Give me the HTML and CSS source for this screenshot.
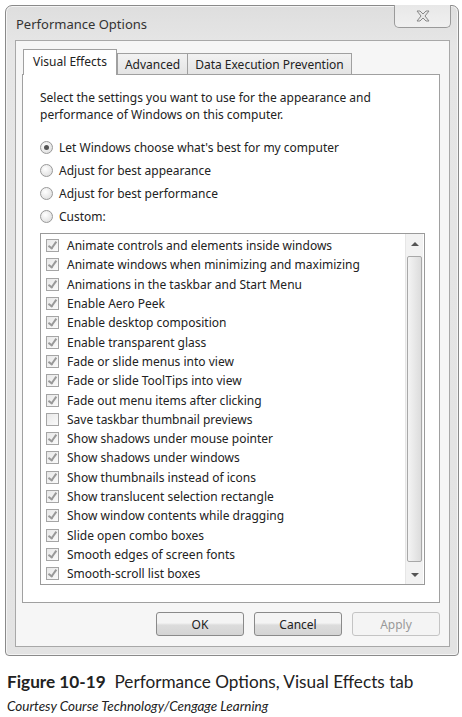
FILE: index.html
```html
<!DOCTYPE html>
<html lang="en">
<head>
    <meta charset="UTF-8">
    <title>Performance Options</title>
    <link rel="stylesheet" href="styles.css">
</head>
<body>
    <div class="window">
        <div class="titlebar">
            <span class="title">Performance Options</span>
            <div class="close">
                <svg width="14" height="12" viewBox="0 0 14 12"><path d="M1 1h3l3 3 3-3h3l-4 5 4 5h-3l-3-3-3 3H1l4-5z" fill="#e8e8e8" stroke="#888" stroke-width="1"/></svg>
            </div>
        </div>
        <div class="client">
            <div class="tabs">
                <div class="tab active">Visual Effects</div>
                <div class="tab">Advanced</div>
                <div class="tab">Data Execution Prevention</div>
            </div>
            <div class="panel">
                <p class="intro">Select the settings you want to use for the appearance and performance of Windows on this computer.</p>
                <div class="radios">
                    <label class="radio"><span class="dot on"></span>Let Windows choose what's best for my computer</label>
                    <label class="radio"><span class="dot"></span>Adjust for best appearance</label>
                    <label class="radio"><span class="dot"></span>Adjust for best performance</label>
                    <label class="radio"><span class="dot"></span>Custom:</label>
                </div>
                <div class="listbox">
                    <ul class="items">
                        <li><span class="check on"></span>Animate controls and elements inside windows</li>
                        <li><span class="check on"></span>Animate windows when minimizing and maximizing</li>
                        <li><span class="check on"></span>Animations in the taskbar and Start Menu</li>
                        <li><span class="check on"></span>Enable Aero Peek</li>
                        <li><span class="check on"></span>Enable desktop composition</li>
                        <li><span class="check on"></span>Enable transparent glass</li>
                        <li><span class="check on"></span>Fade or slide menus into view</li>
                        <li><span class="check on"></span>Fade or slide ToolTips into view</li>
                        <li><span class="check on"></span>Fade out menu items after clicking</li>
                        <li><span class="check"></span>Save taskbar thumbnail previews</li>
                        <li><span class="check on"></span>Show shadows under mouse pointer</li>
                        <li><span class="check on"></span>Show shadows under windows</li>
                        <li><span class="check on"></span>Show thumbnails instead of icons</li>
                        <li><span class="check on"></span>Show translucent selection rectangle</li>
                        <li><span class="check on"></span>Show window contents while dragging</li>
                        <li><span class="check on"></span>Slide open combo boxes</li>
                        <li><span class="check on"></span>Smooth edges of screen fonts</li>
                        <li><span class="check on"></span>Smooth-scroll list boxes</li>
                    </ul>
                    <div class="scrollbar">
                        <div class="arrow up"></div>
                        <div class="thumb"></div>
                        <div class="arrow down"></div>
                    </div>
                </div>
            </div>
            <div class="buttons">
                <button class="btn">OK</button>
                <button class="btn">Cancel</button>
                <button class="btn disabled">Apply</button>
            </div>
        </div>
    </div>
    <div class="caption">
        <p class="figure"><b>Figure 10-19</b>&nbsp; Performance Options, Visual Effects tab</p>
        <p class="credit">Courtesy Course Technology/Cengage Learning</p>
    </div>
</body>
</html>
```

FILE: styles.css
```css
body {
    margin: 0;
    background-color: #fff;
    font-family: 'Noto Sans', 'Open Sans', sans-serif;
    font-size: 12px;
    color: #222;
}
.window {
    box-sizing: border-box;
    width: 454px;
    height: 651px;
    margin: 5px 0 0 5px;
    border: 1px solid #8a8a8a;
    border-radius: 7px 7px 4px 4px;
    background: linear-gradient(to bottom, #dedede, #e6e6e6 40px, #e3e3e3);
    padding: 0 8px 8px 9px;
    box-shadow: inset 0 0 0 1px #f4f4f4;
}
.titlebar {
    height: 34px;
    display: flex;
    justify-content: space-between;
    align-items: flex-start;
}
.title {
    margin: 9px 0 0 1px;
    font-size: 13px;
    color: #333;
}
.close {
    width: 55px;
    height: 22px;
    margin: -1px -1px 0 0;
    border: 1px solid #9a9a9a;
    border-top: none;
    border-radius: 0 0 5px 5px;
    background: linear-gradient(to bottom, #e8e8e8, #f0f0f0);
    display: flex;
    justify-content: center;
    align-items: center;
}
.client {
    box-sizing: border-box;
    height: 607px;
    border: 1px solid #a8a8a8;
    background-color: #f6f6f6;
    padding: 9px 9px 0 6px;
}
.tabs {
    display: flex;
    align-items: flex-end;
    height: 24px;
    margin-left: 1px;
    position: relative;
    z-index: 1;
}
.tab {
    box-sizing: border-box;
    height: 21px;
    padding: 0 7px;
    border: 1px solid #a0a0a0;
    border-bottom: none;
    background: linear-gradient(to bottom, #f2f2f2, #e4e4e4);
    display: flex;
    align-items: center;
    color: #222;
    margin-left: -1px;
    white-space: nowrap;
}
.tab.active {
    background: #fff;
    padding: 3px 9px 0;
    margin-left: 0;
    margin-right: 1px;
    margin-bottom: -1px;
    height: 26px;
    align-items: flex-start;
}
.panel {
    box-sizing: border-box;
    height: 529px;
    width: 418px;
    background: #fff;
    border: 1px solid #a0a0a0;
    padding: 14px 0 0 17px;
}
.intro {
    margin: 0;
    line-height: 17px;
    width: 370px;
}
.radios {
    margin-top: 16px;
    display: flex;
    flex-direction: column;
    gap: 6px;
}
.radio {
    display: flex;
    align-items: center;
    height: 17px;
}
.dot {
    box-sizing: border-box;
    width: 13px;
    height: 13px;
    border-radius: 50%;
    border: 1px solid #999;
    background: radial-gradient(circle at 40% 35%, #fff, #d8d8d8);
    margin: 0 6px 0 0;
    position: relative;
}
.dot.on::after {
    content: '';
    position: absolute;
    left: 3px;
    top: 3px;
    width: 5px;
    height: 5px;
    border-radius: 50%;
    background: #555;
}
.listbox {
    box-sizing: border-box;
    display: flex;
    width: 385px;
    height: 352px;
    margin-top: 8px;
    border: 1px solid #9a9a9a;
}
.items {
    list-style: none;
    margin: 0;
    padding: 2px 0 0 5px;
    flex: 1;
}
.items li {
    height: 19.3px;
    display: flex;
    align-items: center;
    white-space: nowrap;
}
.check {
    box-sizing: border-box;
    width: 13px;
    height: 13px;
    border: 1px solid #a5a5a5;
    background: linear-gradient(135deg, #e8e8e8, #fafafa);
    margin-right: 8px;
    position: relative;
}
.check.on::after {
    content: '';
    position: absolute;
    left: 3px;
    top: 0px;
    width: 3px;
    height: 7px;
    border: solid #999;
    border-width: 0 2px 2px 0;
    transform: rotate(35deg);
}
.scrollbar {
    width: 17px;
    margin: 0 1px 0 0;
    background: #f2f2f2;
    border-left: 1px solid #e6e6e6;
    display: flex;
    flex-direction: column;
}
.arrow {
    height: 20px;
    position: relative;
}
.arrow::after {
    content: '';
    position: absolute;
    left: 5px;
    border-left: 4px solid transparent;
    border-right: 4px solid transparent;
}
.arrow.up::after {
    top: 8px;
    border-bottom: 4px solid #555;
}
.arrow.down::after {
    top: 9px;
    border-top: 4px solid #555;
}
.thumb {
    flex: 1;
    margin: 2px 1px;
    border: 1px solid #a8a8a8;
    border-radius: 2px;
    background: linear-gradient(to right, #f4f4f4, #dcdcdc);
}
.buttons {
    display: flex;
    justify-content: flex-end;
    gap: 10px;
    margin-top: 9px;
}
.btn {
    box-sizing: border-box;
    width: 88px;
    height: 24px;
    border: 1px solid #8a8a8a;
    border-radius: 3px;
    background: linear-gradient(to bottom, #f4f4f4 45%, #dcdcdc 55%, #d4d4d4);
    font-family: inherit;
    font-size: 12px;
    color: #222;
}
.btn.disabled {
    color: #999;
    border-color: #c4c4c4;
    background: #f4f4f4;
}
.caption {
    padding: 15px 0 0 7px;
    font-family: 'Lato', 'Open Sans', sans-serif;
    color: #222;
}
.figure {
    margin: 0;
    font-size: 17.2px;
    line-height: 22px;
}
.credit {
    margin: 5px 0 0;
    font-style: italic;
    font-size: 13.5px;
}
```
